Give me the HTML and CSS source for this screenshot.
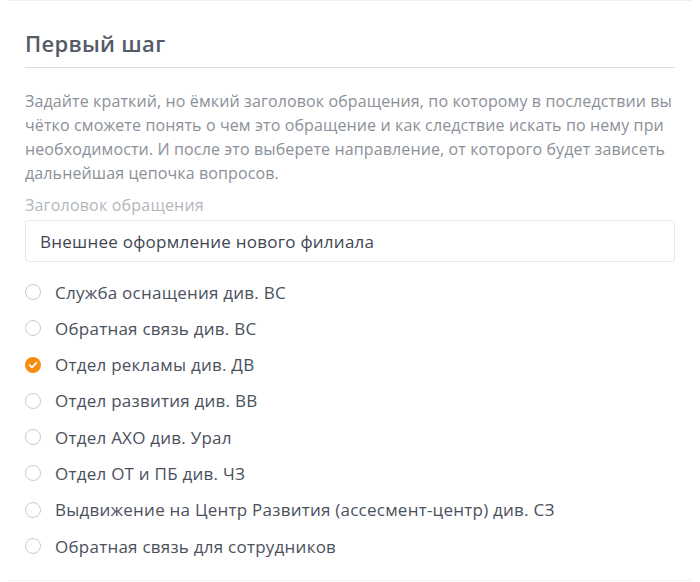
FILE: index.html
```html
<!DOCTYPE html>
<html lang="ru">
<head>
<meta charset="utf-8">
<link rel="stylesheet" href="styles.css">
</head>
<body>
<div class="card">
  <h2 class="title">Первый шаг</h2>
  <p class="desc">Задайте краткий, но ёмкий заголовок обращения, по которому в последствии вы чётко сможете понять о чем это обращение и как следствие искать по нему при необходимости. И после это выберете направление, от которого будет зависеть дальнейшая цепочка вопросов.</p>
  <label class="label">Заголовок обращения</label>
  <div class="input">Внешнее оформление нового филиала</div>
  <ul class="radios">
    <li class="radio"><span class="dot"></span>Служба оснащения див. ВС</li>
    <li class="radio"><span class="dot"></span>Обратная связь див. ВС</li>
    <li class="radio"><span class="dot checked"><svg viewBox="0 0 16 16" width="16" height="16"><path d="M4.6 8.2 L7 10.4 L11.4 5.8" fill="none" stroke="#fff" stroke-width="1.8" stroke-linecap="round" stroke-linejoin="round"/></svg></span>Отдел рекламы див. ДВ</li>
    <li class="radio"><span class="dot"></span>Отдел развития див. ВВ</li>
    <li class="radio"><span class="dot"></span>Отдел АХО див. Урал</li>
    <li class="radio"><span class="dot"></span>Отдел ОТ и ПБ див. ЧЗ</li>
    <li class="radio"><span class="dot"></span>Выдвижение на Центр Развития (ассесмент-центр) див. СЗ</li>
    <li class="radio"><span class="dot"></span>Обратная связь для сотрудников</li>
  </ul>
</div>
</body>
</html>
```
FILE: styles.css
```css
html, body {
  margin: 0;
  padding: 0;
  background: #fff;
}
body {
  font-family: "Open Sans", "Noto Sans", sans-serif;
  width: 700px;
  height: 582px;
  overflow: hidden;
}
.card {
  margin: 0 0 0 8px;
  width: 684px;
  height: 581px;
  border-top: 1px solid #eeeff1;
  border-bottom: 1px solid #eeeff1;
  box-sizing: border-box;
  padding: 0 17px;
}
.title {
  margin: 0;
  padding-top: 28px;
  padding-bottom: 10px;
  font-size: 22px;
  line-height: 28px;
  font-weight: 600;
  color: #535b67;
  border-bottom: 1px solid #dcdde0;
  letter-spacing: 0.3px;
}
.desc {
  margin: 21px 0 0;
  font-size: 16px;
  line-height: 24px;
  color: #8b9099;
  letter-spacing: 0.12px;
}
.label {
  display: block;
  margin-top: 10px;
  font-size: 16px;
  line-height: 20px;
  color: #b3b6bc;
  letter-spacing: 0.2px;
}
.input {
  margin-top: 5px;
  height: 42px;
  box-sizing: border-box;
  border: 1px solid #e6e7e9;
  border-radius: 4px;
  padding: 0 14px;
  display: flex;
  align-items: center;
  font-size: 17px;
  color: #3f4653;
  letter-spacing: 0.25px;
}
.radios {
  list-style: none;
  margin: 19px 0 0;
  padding: 0;
  display: flex;
  flex-direction: column;
  gap: 14.3px;
}
.radio {
  display: flex;
  align-items: center;
  gap: 14px;
  height: 22px;
  font-size: 17px;
  color: #4a515d;
  letter-spacing: 0.24px;
}
.dot {
  width: 16px;
  height: 16px;
  box-sizing: border-box;
  border: 1.5px solid #c9cbcf;
  border-radius: 50%;
  flex: none;
  display: flex;
}
.dot.checked {
  border: none;
  background: #f98c10;
}
```
